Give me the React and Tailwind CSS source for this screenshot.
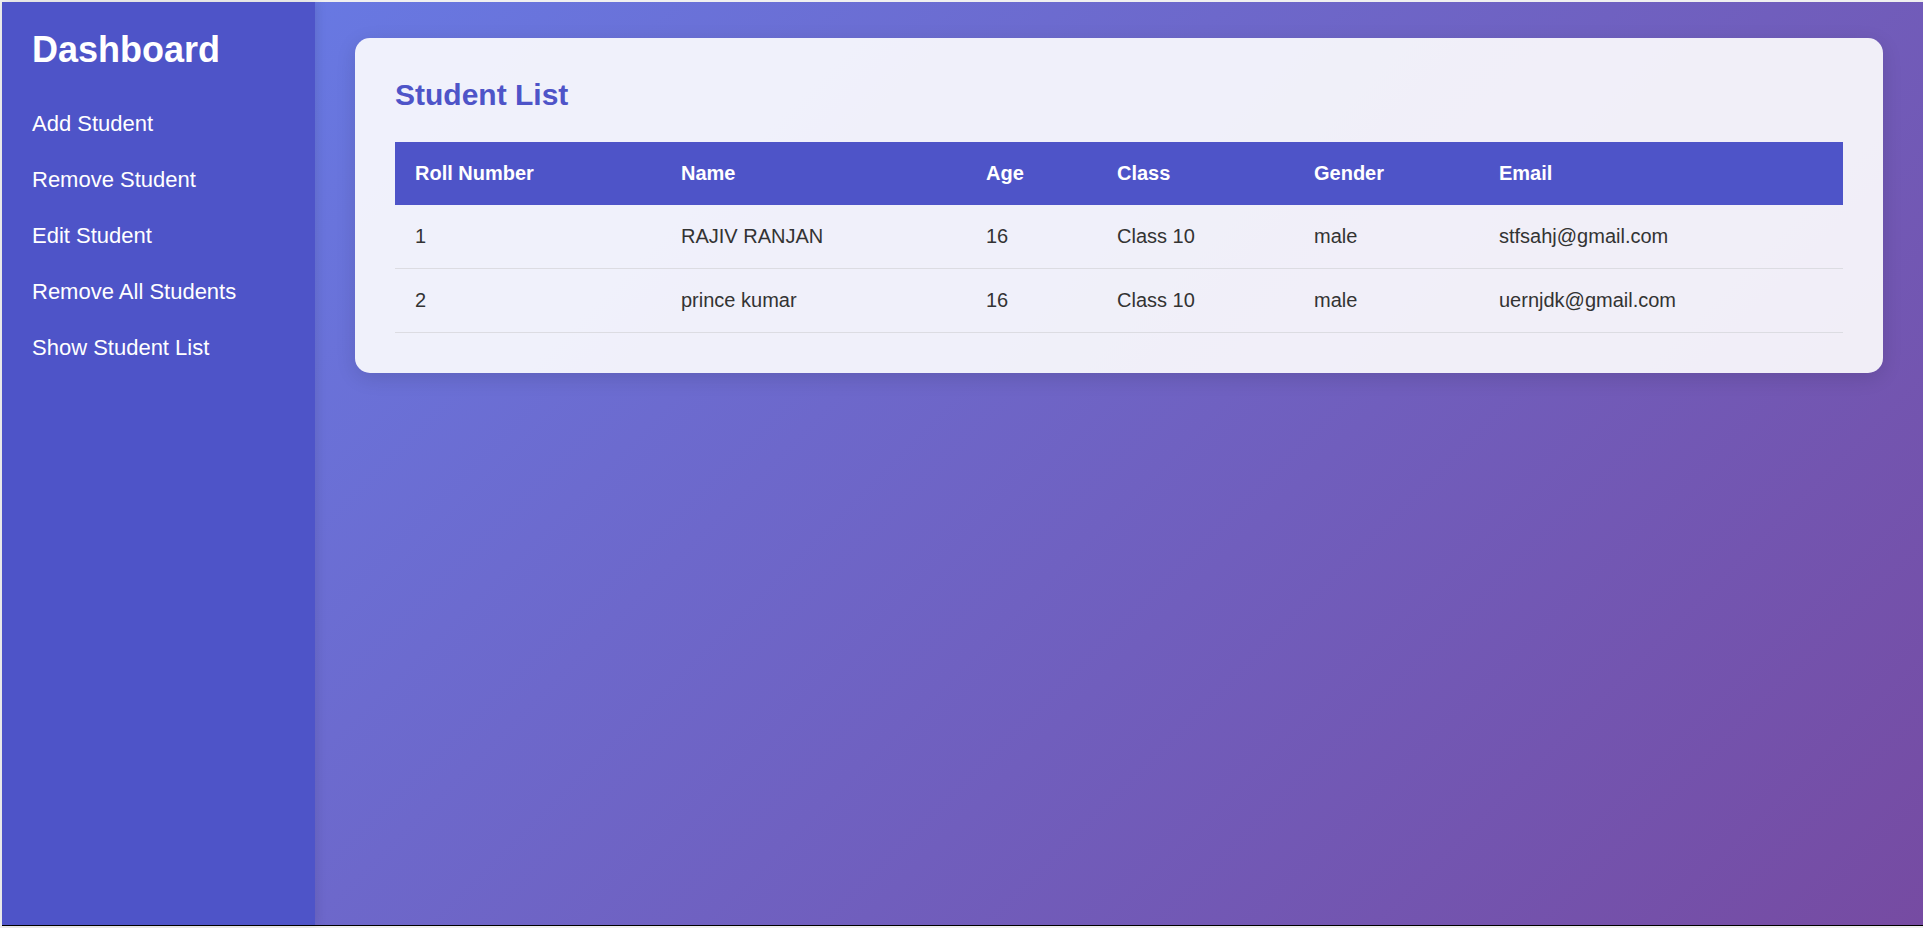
import React from "react";

const students = [
  { roll: 1, name: "RAJIV RANJAN", age: 16, className: "Class 10", gender: "male", email: "stfsahj@gmail.com" },
  { roll: 2, name: "prince kumar", age: 16, className: "Class 10", gender: "male", email: "uernjdk@gmail.com" },
];

const navItems = ["Add Student", "Remove Student", "Edit Student", "Remove All Students", "Show Student List"];

export default function App() {
  return (
    <div className="h-[928px] w-full bg-[#f0f0f0] pl-[2px] pt-[2px] pb-[2px] font-['Liberation_Sans',Arial,sans-serif]">
      <div className="flex h-full w-full border-b border-black bg-[linear-gradient(135deg,#667eea_0%,#764ba2_100%)]">
        {/* sidebar */}
        <aside className="w-[313px] shrink-0 bg-[#4e54c8] pl-[30px] pt-[27px] text-white shadow-[2px_0_10px_rgba(0,0,0,0.1)]">
          <h2 className="mb-[26px] text-[36px] font-bold leading-[41px]">Dashboard</h2>
          <ul>
            {navItems.map((item) => (
              <li key={item} className="flex h-[55.8px] items-center text-[22px] leading-[25px] cursor-pointer">
                {item}
              </li>
            ))}
          </ul>
        </aside>

        {/* main */}
        <main className="flex-1 pl-[40px] pr-[40px] pt-[36px]">
          <div className="rounded-[15px] bg-white/90 p-[40px] shadow-[0_5px_20px_rgba(0,0,0,0.12)]">
            <h2 className="mb-[30px] text-[30px] font-bold leading-[34px] text-[#4e54c8]">Student List</h2>
            <table className="w-full table-fixed border-collapse text-left text-[20px] leading-[23px]">
              <colgroup>
                <col className="w-[266px]" />
                <col className="w-[305px]" />
                <col className="w-[131px]" />
                <col className="w-[197px]" />
                <col className="w-[185px]" />
                <col />
              </colgroup>
              <thead>
                <tr className="bg-[#4e54c8] text-white">
                  <th className="px-[20px] py-[20px] font-bold">Roll Number</th>
                  <th className="px-[20px] py-[20px] font-bold">Name</th>
                  <th className="px-[20px] py-[20px] font-bold">Age</th>
                  <th className="px-[20px] py-[20px] font-bold">Class</th>
                  <th className="px-[20px] py-[20px] font-bold">Gender</th>
                  <th className="px-[20px] py-[20px] font-bold">Email</th>
                </tr>
              </thead>
              <tbody className="text-[#333]">
                {students.map((s) => (
                  <tr key={s.roll} className="border-b border-[#dcdce2]">
                    <td className="px-[20px] py-[20px]">{s.roll}</td>
                    <td className="px-[20px] py-[20px]">{s.name}</td>
                    <td className="px-[20px] py-[20px]">{s.age}</td>
                    <td className="px-[20px] py-[20px]">{s.className}</td>
                    <td className="px-[20px] py-[20px]">{s.gender}</td>
                    <td className="px-[20px] py-[20px]">{s.email}</td>
                  </tr>
                ))}
              </tbody>
            </table>
          </div>
        </main>
      </div>
    </div>
  );
}
